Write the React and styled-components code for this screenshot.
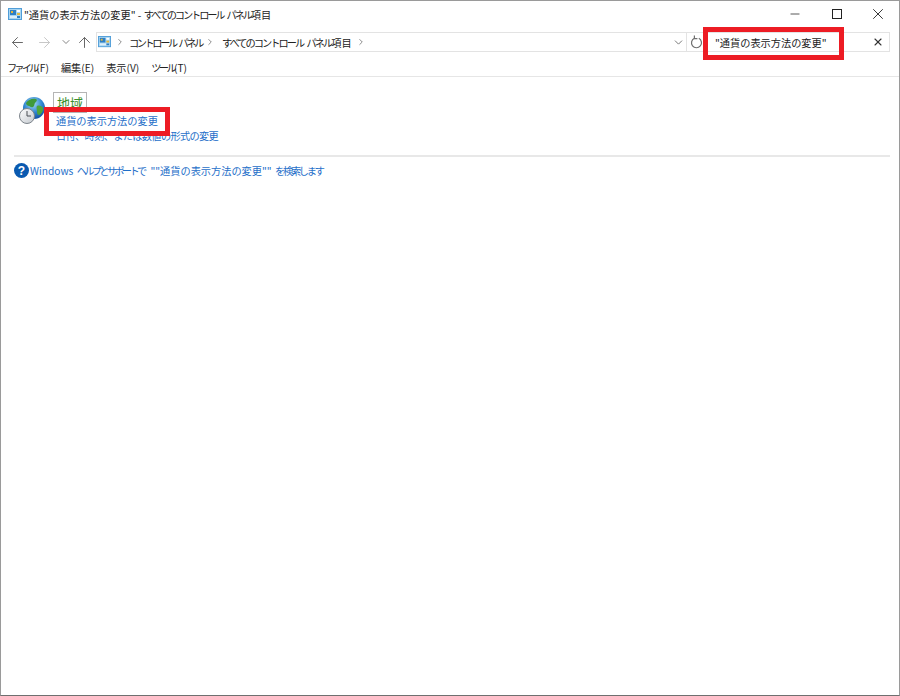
import React from 'react';
import styled, { createGlobalStyle } from 'styled-components';
import { ArrowLeft, ArrowRight, ArrowUp, ChevronDown, ChevronRight, X, Minus } from 'lucide-react';

const GlobalStyle = createGlobalStyle`
  html, body {
    margin: 0;
    padding: 0;
    background: #fff;
  }
`;

const Window = styled.div`
  position: relative;
  box-sizing: border-box;
  width: 900px;
  height: 696px;
  overflow: hidden;
  border: 1px solid #9a9a9a;
  border-bottom-color: #6f6f6f;
  background: #fff;
  color: #1a1a1a;
  font-family: 'Noto Sans CJK JP', 'Noto Sans', sans-serif;
  font-size: 10.2px;
`;

// kana in the original UI font is much narrower than in Noto, so squeeze those runs
const Narrow = styled.span`
  letter-spacing: ${(props) => props.$s || -2.5}px;
  word-spacing: 3px;
`;

const TitleBar = styled.div`
  display: flex;
  align-items: center;
  height: 26px;
  padding-left: 7px;
`;

const TitleText = styled.span`
  margin-left: 2px;
  color: #222;
  white-space: pre;
`;

const WindowButtons = styled.div`
  display: flex;
  align-items: center;
  margin-left: auto;
`;

const WindowButton = styled.span`
  display: flex;
  justify-content: center;
  width: 41.5px;
  color: #222;
`;

const MaxBox = styled.span`
  box-sizing: border-box;
  width: 10px;
  height: 10px;
  border: 1px solid #222;
`;

const AddressRow = styled.div`
  display: flex;
  align-items: center;
  height: 22px;
  margin-top: 4px;
  padding-left: 5px;
  padding-right: 9px;
`;

const NavButton = styled.span`
  display: flex;
  justify-content: center;
  width: ${(props) => props.$width || 24}px;
  color: ${(props) => (props.$muted ? '#c6c6c6' : '#666')};
`;

const AddressBar = styled.div`
  display: flex;
  align-items: center;
  box-sizing: border-box;
  flex: 1;
  height: 20px;
  padding: 0 1px;
  border: 1px solid #e3e3e3;
`;

const Crumb = styled.span`
  margin: 0 ${(props) => props.$right}px 0 ${(props) => props.$left}px;
  color: #222;
  white-space: pre;
`;

const CrumbSep = styled.span`
  display: flex;
  color: #555;
  margin-left: ${(props) => props.$gap || 0}px;
`;

const AddressEnd = styled.span`
  display: flex;
  margin-left: auto;
  color: #666;
`;

const Refresh = styled.span`
  display: flex;
  justify-content: center;
  align-items: center;
  box-sizing: border-box;
  width: 20px;
  height: 20px;
  border-top: 1px solid #e3e3e3;
  border-bottom: 1px solid #e3e3e3;
  border-right: 1px solid #e3e3e3;
`;

const SearchBox = styled.div`
  display: flex;
  align-items: center;
  box-sizing: border-box;
  width: 183px;
  height: 20px;
  padding: 0 5px 0 8px;
  border: 1px solid #e3e3e3;
  border-left: none;
  color: #222;
`;

const SearchClear = styled.span`
  display: flex;
  margin-left: auto;
  color: #333;
`;

const MenuBar = styled.div`
  display: flex;
  align-items: center;
  gap: 12px;
  height: 15px;
  margin-top: 7px;
  padding-left: 6px;
  padding-bottom: 1px;
  border-bottom: 1px solid #e6e6e6;
`;

const MenuItem = styled.span`
  color: #222;
  white-space: pre;
`;

const Content = styled.div`
  padding: 15px 9px 0 13px;
`;

const ResultGroup = styled.div`
  display: flex;
  height: 63px;
  padding-left: 4px;
  border-bottom: 2px solid #e8e8e8;
`;

const GroupIcon = styled.div`
  flex: none;
  width: 30px;
  height: 32px;
  margin-top: 4px;
`;

const GroupBody = styled.div`
  display: flex;
  flex-direction: column;
  align-items: flex-start;
  margin-left: 8px;
`;

const GroupTitle = styled.span`
  box-sizing: border-box;
  height: 21px;
  padding: 0 3px;
  line-height: 20px;
  font-size: 13px;
  color: #3b8f2e;
  border: 1px solid #b5b5b5;
  margin-left: -3px;
`;

const TaskLink = styled.a`
  display: block;
  line-height: 15px;
  color: #1f6fc9;
  white-space: nowrap;
`;

const HelpRow = styled.div`
  display: flex;
  align-items: center;
  margin-top: 6px;
`;

const HelpBadge = styled.span`
  display: flex;
  align-items: center;
  justify-content: center;
  width: 15px;
  height: 15px;
  border-radius: 50%;
  background: #0a5ab0;
  color: #fff;
  font-family: 'Liberation Sans', sans-serif;
  font-weight: bold;
  font-size: 12px;
`;

const HelpText = styled.a`
  margin-left: 1px;
  color: #1f6fc9;
  white-space: pre;
  word-spacing: 1px;
`;

// red annotation boxes drawn on top of the screenshot
const Highlight = styled.div`
  position: absolute;
  box-sizing: border-box;
  left: ${(props) => props.$x}px;
  top: ${(props) => props.$y}px;
  width: ${(props) => props.$w}px;
  height: ${(props) => props.$h}px;
  border: 5px solid #ed1c24;
`;

const FolderIcon = ({ size = 14 }) => (
  <svg width={size} height={size * 0.86} viewBox="0 0 14 12">
    <rect x="0.5" y="0.5" width="13" height="11" fill="#a9d6f2" stroke="#4f9dd8" />
    <rect x="2" y="2" width="6" height="5" fill="#2f7fc4" />
    <rect x="3" y="3" width="2" height="2" fill="#e6b93c" />
    <rect x="9" y="2" width="3" height="2" fill="#ffffff" />
    <rect x="9" y="5" width="3" height="2" fill="#e6b93c" />
    <rect x="2" y="8" width="10" height="2" fill="#dff0fb" />
    <rect x="9" y="8" width="3" height="2" fill="#2f7fc4" />
  </svg>
);

const RefreshIcon = () => (
  <svg width="13" height="14" viewBox="0 0 13 14" fill="none" stroke="#6f6f6f" strokeWidth="1.2">
    <path d="M4.4 3.2A5 5 0 1 0 8.8 3.3" />
    <path d="M4.4 0.6V3.6H7.4" />
  </svg>
);

const GlobeClock = () => (
  <svg width="30" height="32" viewBox="0 0 30 32">
    <defs>
      <radialGradient id="sea" cx="45%" cy="30%" r="75%">
        <stop offset="0%" stopColor="#a8dcf5" />
        <stop offset="55%" stopColor="#2f86d0" />
        <stop offset="100%" stopColor="#0f4a9c" />
      </radialGradient>
      <linearGradient id="dial" x1="0" y1="0" x2="1" y2="1">
        <stop offset="0%" stopColor="#ffffff" />
        <stop offset="100%" stopColor="#c3c8ce" />
      </linearGradient>
    </defs>
    <circle cx="16" cy="12" r="11" fill="url(#sea)" />
    <path d="M8 7c2-3 6-5 10-4 2 1 0 3-1 4s0 3-2 4-3-1-4-1-3-1-3-3z" fill="#3f9a3c" />
    <path d="M19 10c2-1 5 0 6 2s-2 7-4 7-2-3-2-4-1-4 0-5z" fill="#4fa53c" />
    <circle cx="9" cy="20" r="7.5" fill="url(#dial)" stroke="#7d848b" />
    <path d="M9 15v5h4" fill="none" stroke="#4a4f55" strokeWidth="1" />
  </svg>
);

const App = () => (
  <>
    <GlobalStyle />
    <Window>
      <TitleBar>
        <FolderIcon />
        <TitleText>
          "通貨の表示方法の変更" - <Narrow $s={-2.1}>すべてのコントロール パネル</Narrow>項目
        </TitleText>
        <WindowButtons>
          <WindowButton><Minus size={14} strokeWidth={1.3} /></WindowButton>
          <WindowButton><MaxBox /></WindowButton>
          <WindowButton><X size={18} strokeWidth={1.2} /></WindowButton>
        </WindowButtons>
      </TitleBar>

      <AddressRow>
        <NavButton $width={22}><ArrowLeft size={17} strokeWidth={1.4} /></NavButton>
        <NavButton $width={32} $muted><ArrowRight size={17} strokeWidth={1.4} /></NavButton>
        <NavButton $width={12}><ChevronDown size={12} strokeWidth={1.6} /></NavButton>
        <NavButton $width={24}><ArrowUp size={17} strokeWidth={1.4} /></NavButton>
        <AddressBar>
          <FolderIcon size={13} />
          <CrumbSep $gap={4}><ChevronRight size={10} strokeWidth={1.6} /></CrumbSep>
          <Crumb $left={4} $right={3}><Narrow $s={-2.4}>コントロール パネル</Narrow></Crumb>
          <CrumbSep><ChevronRight size={10} strokeWidth={1.6} /></CrumbSep>
          <Crumb $left={7} $right={4}><Narrow $s={-1.95}>すべてのコントロール パネル</Narrow>項目</Crumb>
          <CrumbSep><ChevronRight size={10} strokeWidth={1.6} /></CrumbSep>
          <AddressEnd><ChevronDown size={13} strokeWidth={1.6} /></AddressEnd>
        </AddressBar>
        <Refresh><RefreshIcon /></Refresh>
        <SearchBox>
          "通貨の表示方法の変更"
          <SearchClear><X size={12} strokeWidth={2.2} /></SearchClear>
        </SearchBox>
      </AddressRow>

      <MenuBar>
        <MenuItem><Narrow $s={-2.85}>ファイル</Narrow>(F)</MenuItem>
        <MenuItem>編集(E)</MenuItem>
        <MenuItem>表示(V)</MenuItem>
        <MenuItem><Narrow $s={-2.6}>ツール</Narrow>(T)</MenuItem>
      </MenuBar>

      <Content>
        <ResultGroup>
          <GroupIcon><GlobeClock /></GroupIcon>
          <GroupBody>
            <GroupTitle>地域</GroupTitle>
            <TaskLink>通貨の表示方法の変更</TaskLink>
            <TaskLink><Narrow $s={-0.65}>日付、時刻、または数値の形式の変更</Narrow></TaskLink>
          </GroupBody>
        </ResultGroup>
        <HelpRow>
          <HelpBadge>?</HelpBadge>
          <HelpText>
            Windows <Narrow $s={-2.65}>ヘルプとサポート</Narrow>で ""通貨の表示方法の変更"" <Narrow $s={-2.2}>を検索します</Narrow>
          </HelpText>
        </HelpRow>
      </Content>

      <Highlight $x={702} $y={26} $w={141} $h={33} />
      <Highlight $x={43} $y={106} $w={126} $h={29} />
    </Window>
  </>
);

export default App;
